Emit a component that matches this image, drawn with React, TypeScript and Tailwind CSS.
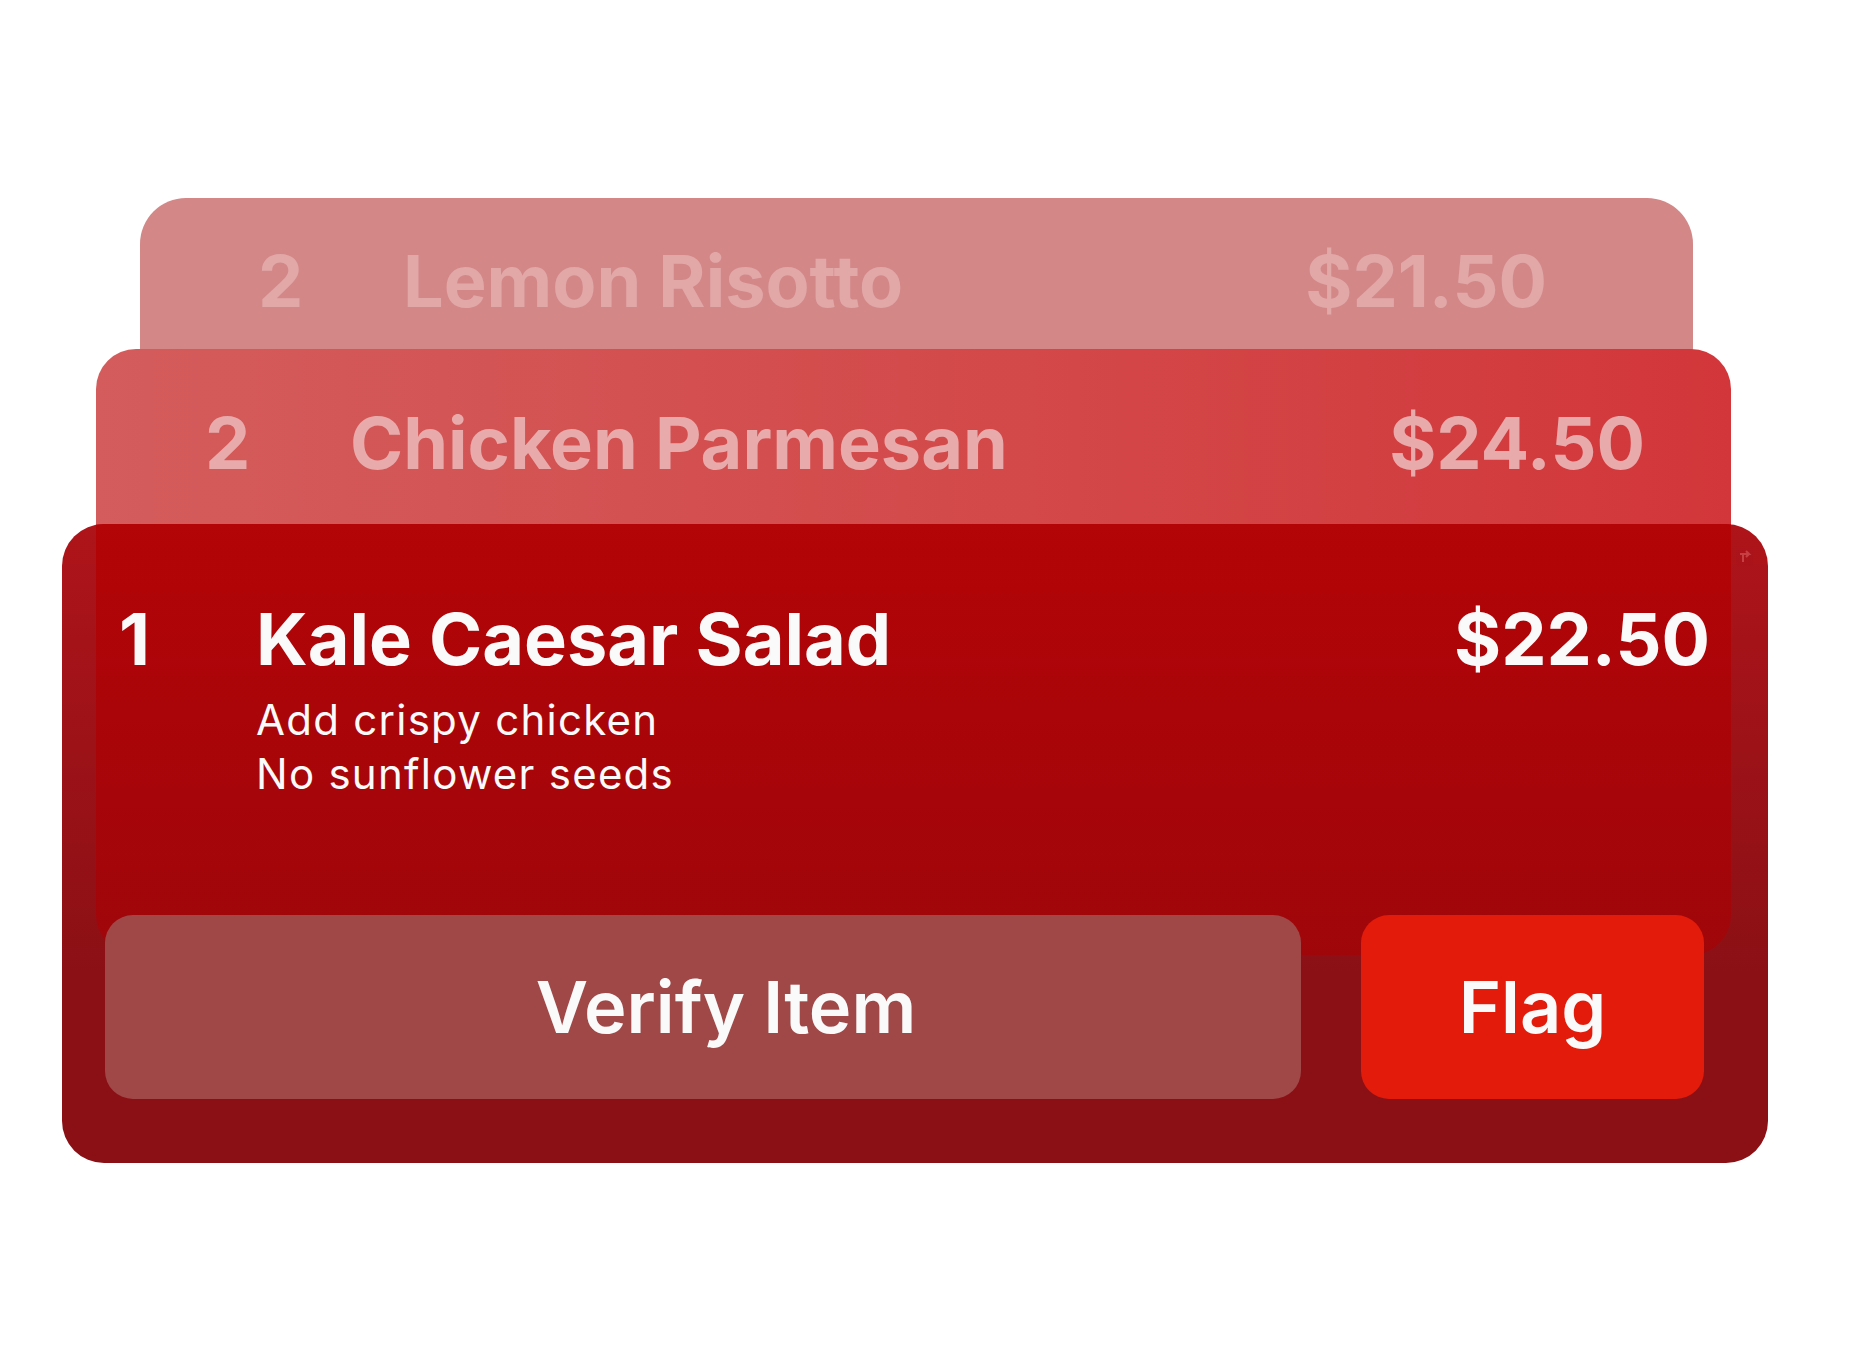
import React from 'react';

interface Line {
  qty: number;
  name: string;
  price: string;
}

const backItem: Line = { qty: 2, name: 'Lemon Risotto', price: '$21.50' };
const midItem: Line = { qty: 2, name: 'Chicken Parmesan', price: '$24.50' };
const frontItem = {
  qty: 1,
  name: 'Kale Caesar Salad',
  price: '$22.50',
  mods: ['Add crispy chicken', 'No sunflower seeds'],
};

const font = { fontFamily: 'Inter, "Noto Sans", sans-serif' };

export default function App() {
  return (
    <div className="w-[1863px] h-[1362px] bg-white pt-[198px] pl-[62px]" style={font}>
      <div className="grid w-[1706px]">
        {/* back card */}
        <div className="col-start-1 row-start-1 ml-[78px] mr-[75px] h-[400px] rounded-[46px] bg-[#d38787]">
          <div className="flex items-start pt-[47px] pl-[118px] pr-[146px] text-[72px] font-bold leading-none text-[#e2a7a7]">
            <span className="w-[145px] shrink-0">{backItem.qty}</span>
            <span className="flex-1">{backItem.name}</span>
            <span>{backItem.price}</span>
          </div>
        </div>

        {/* middle card */}
        <div className="col-start-1 row-start-1 mt-[151px] ml-[34px] mr-[37px] h-[611px] rounded-[40px] bg-linear-to-r from-[#d45c5c] to-[#d2363a]">
          <div className="flex items-start pt-[58px] pl-[109px] pr-[86px] text-[72px] font-bold leading-none text-[#e8aaaa]">
            <span className="w-[145px] shrink-0">{midItem.qty}</span>
            <span className="flex-1">{midItem.name}</span>
            <span>{midItem.price}</span>
          </div>
        </div>

        {/* front card */}
        <div className="col-start-1 row-start-1 mt-[326px] h-[639px] rounded-[42px] relative overflow-hidden bg-linear-to-b from-[#ae141a] to-[#8b1015] to-[70%]">
          <div className="absolute left-[34px] right-[37px] top-0 h-[431px] rounded-b-[40px] bg-linear-to-b from-[#b30407] to-[#9f060a]" />
          <svg
            className="absolute top-[24px] right-[12px] opacity-40"
            width="18"
            height="16"
            viewBox="0 0 18 16"
            fill="none"
            stroke="#f08080"
            strokeWidth="2"
          >
            <path d="M2 6h9l-3-3M11 6l-3 3M5 6v8" />
          </svg>

          <div className="relative flex flex-col justify-between h-full">
            <div className="flex items-start pt-[79px] pl-[57px] pr-[58px] text-[#fafafa]">
              <span className="w-[137px] shrink-0 text-[72px] font-bold leading-none">{frontItem.qty}</span>
              <div className="flex-1">
                <div className="text-[72px] font-bold leading-none">{frontItem.name}</div>
                <div className="mt-[18px] text-[42px] leading-[54px] tracking-[0.03em]">
                  {frontItem.mods.map((m) => (
                    <div key={m}>{m}</div>
                  ))}
                </div>
              </div>
              <span className="text-[72px] font-bold leading-none">{frontItem.price}</span>
            </div>

            <div className="flex gap-[60px] pl-[43px] pr-[64px] pb-[64px]">
              <button className="flex-1 h-[184px] rounded-[28px] bg-[#a04848] pl-[46px] text-[72px] font-semibold leading-none text-[#fafafa] flex items-center justify-center">
                Verify Item
              </button>
              <button className="w-[343px] h-[184px] rounded-[28px] bg-[#e31b0b] text-[72px] font-semibold leading-none text-[#fafafa] flex items-center justify-center">
                Flag
              </button>
            </div>
          </div>
        </div>
      </div>
    </div>
  );
}
